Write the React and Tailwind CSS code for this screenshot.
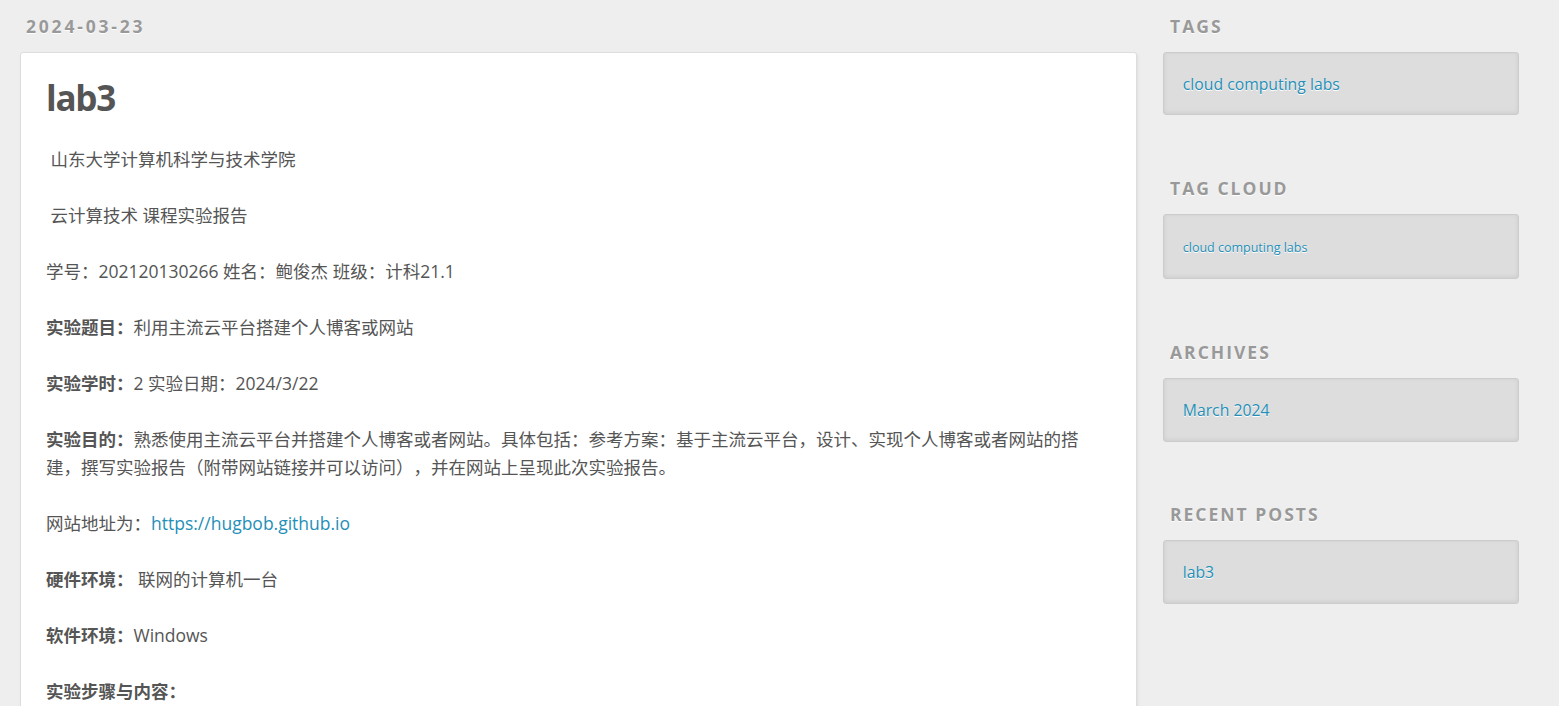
// Halaman posting blog bergaya tema "landscape": kolom artikel di kiri,
// widget sidebar abu-abu di kanan.
const caption =
  "font-bold uppercase text-[#999] text-[17.5px] leading-[17.5px] [text-shadow:0_1px_0_#fff]"

function Widget({ title, box, gap = '', children }) {
  return (
    <div className={gap}>
      <h3 className={`${caption} tracking-[2px] ml-[7px] mb-[16.5px]`}>{title}</h3>
      <div
        className={`${box} flex items-center pl-[18.75px] bg-[#ddd] border border-[#ccc] rounded-[3px] shadow-[inset_0_-1px_4px_#ccc] [text-shadow:0_1px_0_#fff]`}
      >
        {children}
      </div>
    </div>
  )
}

function Label({ children }) {
  return <strong className="font-bold">{children}</strong>
}

export default function App() {
  return (
    <div className="min-h-screen bg-[#eee] flex pl-[20px] text-[#555] [font-family:'Open_Sans','Noto_Sans_CJK_SC',sans-serif] [text-spacing-trim:space-all]">
      <main className="w-[1117px] shrink-0 pt-[18px]">
        <div className={`${caption} tracking-[2.8px] ml-[6px] mb-[16.5px]`}>2024-03-23</div>
        <article className="bg-white border border-[#ddd] rounded-[3px] shadow-[1px_2px_3px_#ddd] px-[25px] pt-[22px] pb-[60px]">
          <h1 className="text-[35px] leading-[45.5px] font-bold tracking-[-1.25px]">lab3</h1>
          <div className="mt-[24.5px] space-y-[28px] text-[17.5px] leading-[28px]">
            <p>{'\u00a0'}山东大学计算机科学与技术学院</p>
            <p>{'\u00a0'}云计算技术 课程实验报告</p>
            <p>学号：202120130266 姓名：鲍俊杰 班级：计科21.1</p>
            <p>
              <Label>实验题目：</Label>利用主流云平台搭建个人博客或网站
            </p>
            <p>
              <Label>实验学时：</Label>2 实验日期：2024/3/22
            </p>
            <p>
              <Label>实验目的：</Label>
              熟悉使用主流云平台并搭建个人博客或者网站。具体包括：参考方案：基于主流云平台，设计、实现个人博客或者网站的搭建，撰写实验报告（附带网站链接并可以访问），并在网站上呈现此次实验报告。
            </p>
            <p>
              网站地址为：
              <a href="#" className="text-[#258fb8]">
                https://hugbob.github.io
              </a>
            </p>
            <p>
              <Label>硬件环境：</Label> 联网的计算机一台
            </p>
            <p>
              <Label>软件环境：</Label>Windows
            </p>
            <p>
              <Label>实验步骤与内容：</Label>
            </p>
            <p>{'\u00a0'}</p>
          </div>
        </article>
      </main>

      <aside className="w-[356px] shrink-0 ml-[26px] pt-[18px]">
        <Widget title="Tags" box="h-[63px] pt-[2px]" gap="mb-[65px]">
          <a href="#" className="text-[#258fb8] text-[15.75px]">cloud computing labs</a>
        </Widget>
        <Widget title="Tag Cloud" box="h-[65px] pt-[4px]" gap="mb-[65px]">
          <a href="#" className="text-[#258fb8] text-[12.5px]">cloud computing labs</a>
        </Widget>
        <Widget title="Archives" box="h-[64px] pt-[2px]" gap="mb-[64px]">
          <a href="#" className="text-[#258fb8] text-[15.75px]">March 2024</a>
        </Widget>
        <Widget title="Recent Posts" box="h-[64px] pt-[2px]">
          <a href="#" className="text-[#258fb8] text-[15.75px]">lab3</a>
        </Widget>
      </aside>
    </div>
  )
}
